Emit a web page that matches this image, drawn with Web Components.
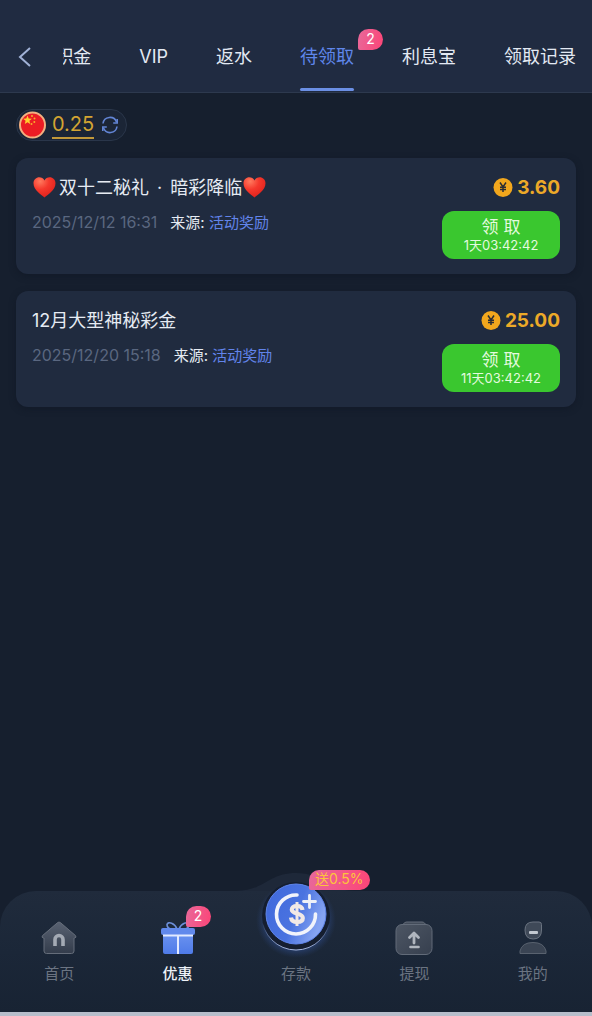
<!DOCTYPE html>
<html lang="zh-CN">
<head>
<meta charset="utf-8">
<meta name="viewport" content="width=device-width, initial-scale=1">
<title>待领取</title>
<style>
  html { background: #161f2e; }
  body {
    margin: 0;
    font-family: Inter, "Noto Sans CJK SC", sans-serif;
    color: #e6ebf3;
    background: #161f2e;
  }
</style>
</head>
<body>
<app-shell>
  <top-bar slot="header">
    <tab-item>积金</tab-item>
    <tab-item>VIP</tab-item>
    <tab-item>返水</tab-item>
    <tab-item active>待领取<pill-badge slot="badge">2</pill-badge></tab-item>
    <tab-item>利息宝</tab-item>
    <tab-item>领取记录</tab-item>
  </top-bar>

  <balance-chip>0.25</balance-chip>
  <reward-card amount="3.60" date="2025/12/12 16:31" source="活动奖励" countdown="1天03:42:42"><heart-icon></heart-icon>双十二秘礼<span> · </span>暗彩降临<heart-icon></heart-icon></reward-card>
  <reward-card amount="25.00" date="2025/12/20 15:18" source="活动奖励" countdown="11天03:42:42">12月大型神秘彩金</reward-card>

  <bottom-nav slot="footer">
    <nav-item icon="home">首页</nav-item>
    <nav-item icon="gift" active>优惠<pill-badge slot="badge">2</pill-badge></nav-item>
    <nav-item icon="deposit" featured>存款<pill-badge slot="badge" promo>送0.5%</pill-badge></nav-item>
    <nav-item icon="withdraw">提现</nav-item>
    <nav-item icon="user">我的</nav-item>
  </bottom-nav>
</app-shell>

<script>
const define = (name, render) => customElements.define(name, class extends HTMLElement {
  constructor() {
    super();
    this.attachShadow({ mode: 'open' });
  }
  connectedCallback() {
    this.shadowRoot.innerHTML = render(this);
  }
});

const icons = {
  home: `<svg width="38" height="36" viewBox="0 0 38 36">
    <defs><linearGradient id="g" x1="0" y1="0" x2="0" y2="1"><stop offset="0" stop-color="#596272"/><stop offset="1" stop-color="#333c4b"/></linearGradient></defs>
    <path d="M17.6 2.6Q19 1.500 20.400 2.600L35.500 15.600Q37 17.500 34.500 18H34V31Q34 33.500 31.500 33.500H6.500Q4 33.500 4 31V18H3.500Q1 17.500 2.500 15.600Z" fill="url(#g)" stroke="#656d7a"/>
    <path d="M15 26V19.500a4 4 0 0 1 8 0V26" fill="none" stroke="#a4aab4" stroke-width="3.600"/></svg>`,
  gift: `<svg width="38" height="36" viewBox="0 0 38 36">
    <defs><linearGradient id="g" x1="0" y1="0" x2="0" y2="1"><stop offset="0" stop-color="#6a92f0"/><stop offset="1" stop-color="#4f7be8"/></linearGradient></defs>
    <path d="M18 9C16 3 9 1 8 4.500Q8 8 12 9M20 9C22 3 29 1 30 4.500Q30 8 26 9" fill="none" stroke="#6c8ed8" stroke-width="1.600"/>
    <rect x="4" y="14" width="30" height="20" rx="2" fill="url(#g)"/>
    <rect x="2" y="8" width="34" height="7" rx="2" fill="#6189ec"/>
    <path d="M4 15.500H34M19 15.500V34" stroke="#e2eaff" stroke-width="2"/></svg>`,
  withdraw: `<svg width="38" height="36" viewBox="0 0 38 36">
    <defs><linearGradient id="g" x1="0" y1="0" x2="1" y2="1"><stop offset="0" stop-color="#4d5664"/><stop offset="1" stop-color="#363f4e"/></linearGradient></defs>
    <path d="M5 7 10 2.500Q11 2 12 2H27Q28.500 2 29.500 3L33 7" fill="#434c5a" stroke="#656d7a"/>
    <rect x="1" y="4.500" width="36" height="30" rx="6" fill="url(#g)" stroke="#626b79"/>
    <path d="M19 23V14M14.500 17.500 19 13l4.500 4.500" fill="none" stroke="#b0b6bf" stroke-width="2.800" stroke-linecap="round" stroke-linejoin="round"/>
    <path d="M15.500 27h8" stroke="#b0b6bf" stroke-width="2.600" stroke-linecap="round"/></svg>`,
  user: `<svg width="38" height="36" viewBox="0 0 38 36">
    <path d="M11 10q0-8 8-8h6q2.500 0 2.500 2.500V10q0 9-8.250 9T11 10Z" fill="#3f4958" stroke="#6a7380"/>
    <path d="M6 33.500V31q2-8.500 13-8.500T32 31v2.500Z" fill="#3a4453" stroke="#59626f" stroke-linejoin="round"/>
    <rect x="15" y="11" width="9" height="3" rx="1" fill="#c3c9d1"/></svg>`,
  deposit: `<svg width="88" height="88" viewBox="0 0 88 88">
    <defs>
      <linearGradient id="disc" x1="0" y1="0" x2="1" y2=".4"><stop offset="0" stop-color="#3f68dc"/><stop offset=".6" stop-color="#4a73e0"/><stop offset="1" stop-color="#86a4f2"/></linearGradient>
      <radialGradient id="glow"><stop offset=".72" stop-color="#3b62b8" stop-opacity=".65"/><stop offset="1" stop-color="#2a4580" stop-opacity="0"/></radialGradient>
      <linearGradient id="rim" x1="0" y1="0" x2="0" y2="1"><stop offset=".6" stop-color="#9db6ee" stop-opacity="0"/><stop offset="1" stop-color="#a9b9e0"/></linearGradient>
    </defs>
    <ellipse cx="44" cy="50" rx="40" ry="38" fill="url(#glow)" opacity=".8"/>
    <circle cx="44" cy="46" r="34" fill="#151e30" stroke="url(#rim)"/>
    <circle cx="44" cy="44" r="30" fill="url(#disc)" stroke="#5f85ea"/>
    <path d="M45 25A19.500 19.500 0 1 0 63.500 44" fill="none" stroke="#f1f3fb" stroke-width="3.600" stroke-linecap="round"/>
    <path d="M57.500 25.500v12M51.500 31.500h12" stroke="#eef1f8" stroke-width="2.800" stroke-linecap="round"/>
    <path d="M50.500 40Q50 36 45 36T39.800 39.800C39.800 44.500 50.800 42.500 50.800 48Q50.800 52 45.200 52T39 47.500" fill="none" stroke="#f1e9e6" stroke-width="4.200"/><path d="M45 32v24" stroke="#f1e9e6" stroke-width="3"/></svg>`
};

define('app-shell', () => `
  <style>
    :host { display: flex; flex-direction: column; min-height: 100vh; }
    main { flex: 1; display: flex; flex-direction: column; gap: 17px; padding: 16px; }
    footer { position: sticky; bottom: 0; }
    .edge { height: 4px; background: #b7becb; }
  </style>
  <header><slot name="header"></slot></header>
  <main><slot></slot></main>
  <footer><slot name="footer"></slot><div class="edge"></div></footer>`);

define('top-bar', () => `
  <style>
    :host { display: flex; box-sizing: border-box; height: 93px; background: #202b41; border-bottom: 1px solid #2d394e; }
    button { width: 63px; padding: 22px 0 0 16px; border: 0; background: none; text-align: left; flex: none; }
    svg { display: block; }
    nav { flex: 1; min-width: 0; display: flex; justify-content: flex-end; gap: 48px; padding-right: 16px; overflow: hidden; }
  </style>
  <button type="button" aria-label="返回">
    <svg width="18" height="22" viewBox="0 0 18 22"><path d="M14 2 4 11l10 9" fill="none" stroke="#a0b1d6" stroke-width="2"/></svg>
  </button>
  <nav><slot></slot></nav>`);

define('tab-item', () => `
  <style>
    :host { display: block; flex: none; }
    a { position: relative; display: flex; flex-direction: column; justify-content: flex-end; box-sizing: border-box; height: 92px; color: #e3e9f3; font-size: 18px; line-height: 28px; text-decoration: none; white-space: nowrap; }
    a::after { content: ""; height: 3px; margin-top: 17px; margin-bottom: 1px; border-radius: 2px; }
    :host([active]) a { color: #5f86ea; }
    :host([active]) a::after { background: #6b8fe4; }
    ::slotted(pill-badge) { position: absolute; left: calc(100% + 4px); top: 29px; }
  </style>
  <a href="#"><span><slot></slot></span><slot name="badge"></slot></a>`);

define('pill-badge', () => `
  <style>
    :host { display: block; box-sizing: border-box; min-width: 25px; height: 21px; border-radius: 11px 11px 11px 2px; background: linear-gradient(100deg, #e8689a, #fc4577); color: #fff; font-size: 14px; font-weight: 400; line-height: 20px; text-align: center; white-space: nowrap; }
    :host([promo]) { padding: 0 6px; height: 20px; color: #fcc43c; line-height: 18px; }
  </style><slot></slot>`);

define('balance-chip', () => `
  <style>
    :host { display: flex; align-self: flex-start; align-items: center; box-sizing: border-box; height: 32px; border: 1px solid #2a364a; border-radius: 16px; padding: 0 7px 0 2px; background: #1b2536; }
    .value { margin: 0 7px 0 5px; color: #d3a432; font-size: 20px; line-height: 25px; border-bottom: 2px solid #c1983a; }
    button { display: flex; padding: 0; border: 0; background: none; }
    svg { display: block; }
  </style>
  <svg width="28" height="28" viewBox="0 0 28 28" role="img" aria-label="人民币">
    <circle cx="13.500" cy="14" r="12.500" fill="#ec1c24" stroke="#f3b080" stroke-width="2"/>
    <path d="m8.500 4.500 1.200 3 3.200.2-2.500 2 .8 3.200-2.700-1.700-2.700 1.700.8-3.200-2.500-2 3.200-.2z" fill="#ffcf2e"/>
    <g fill="#f9ac2b"><circle cx="13" cy="5" r="1"/><circle cx="15.500" cy="7.500" r="1"/><circle cx="15.300" cy="11" r="1"/><circle cx="12.500" cy="13" r="1"/></g>
  </svg>
  <span class="value"><slot></slot></span>
  <button type="button" aria-label="刷新">
    <svg width="18" height="18" viewBox="0 0 18 18" fill="none" stroke="#6284d4" stroke-width="1.600">
      <path d="M2 7.500A7 7 0 0 1 15.500 6M16 10.500A7 7 0 0 1 2.500 12"/><path d="M16.200 3v4h-4M1.800 15v-4h4"/>
    </svg>
  </button>`);

define('heart-icon', () => `
  <style>:host { display: inline-block; width: 23px; height: 22px; margin: 0 3px 0 1px; vertical-align: -4px; } svg { display: block; }</style>
  <svg width="23" height="22" viewBox="0 0 23 22" role="img" aria-label="❤️">
    <defs><radialGradient id="h" cx=".3" cy=".2" r=".9"><stop offset="0" stop-color="#ff7a5e"/><stop offset=".45" stop-color="#f5382c"/><stop offset="1" stop-color="#dc1f1b"/></radialGradient></defs>
    <path d="M11.500 21.500C8 18.500 .5 14 .5 7.300 .5 3.800 3.200 1.300 6.300 1.300c2.200 0 4.200 1.200 5.200 3.200 1-2 3-3.200 5.200-3.200 3.100 0 5.800 2.500 5.800 6 0 6.700-7.500 11.200-11 14.200Z" fill="url(#h)"/>
  </svg>`);

define('reward-card', el => `
  <style>
    :host { display: grid; grid-template-columns: 1fr auto; column-gap: 16px; box-sizing: border-box; padding: 16px 16px 15px; border-radius: 12px; background: #202b3f; box-shadow: 0 2px 6px #121a28; }
    h2 { margin: 0; font-size: 18px; font-weight: 400; line-height: 28px; color: #e6ebf3; }
    ::slotted(span) { margin: 0 3px; }
    p { margin: 8px 0 0; font-size: 15px; line-height: 24px; color: #5a6780; }
    time { font-size: 16px; }
    .from { margin-left: 13px; color: #e6ebf3; }
    a { color: #6284ea; text-decoration: none; }
    .amount { display: flex; align-items: center; justify-content: flex-end; gap: 4px; font-size: 19px; font-weight: 700; line-height: 28px; color: #eca928; }
    button { display: block; width: 118px; height: 48px; margin-top: 9px; padding: 0; border: 0; border-radius: 12px; background: #3ac72f; color: #e3fadf; font-family: inherit; font-size: 17px; line-height: 20px; }
    small { display: block; font-size: 13px; line-height: 16px; }
  </style>
  <div><h2><slot></slot></h2>
    <p><time>${el.getAttribute('date')}</time><span class="from">来源: <a href="#">${el.getAttribute('source')}</a></span></p></div>
  <div><div class="amount">
    <svg width="20" height="20" viewBox="0 0 20 20"><circle cx="10" cy="9.500" r="9.500" fill="#f2a71d"/><path d="M7 4.500 10 9l3-4.500M10 9v5M7 9.200h6M7 11.500h6" fill="none" stroke="#2a2d34" stroke-width="1.500"/></svg>
    <span>${el.getAttribute('amount')}</span></div>
    <button type="button">领 取<small>${el.getAttribute('countdown')}</small></button></div>`);

define('bottom-nav', () => `
  <style>
    :host { position: relative; display: block; }
    nav { position: relative; display: grid; grid-template-columns: repeat(5, 1fr); height: 121px; border-radius: 36px 36px 0 0; background: linear-gradient(#202b3c, #1b2738 50%, #182333); }
    .hump { position: absolute; left: 50%; bottom: 100%; margin-left: -60px; display: block; }
  </style>
  <svg class="hump" width="120" height="19" viewBox="0 0 120 19"><path d="M0 19C28 19 32 1 60 1s32 18 60 18Z" fill="#1e2839"/></svg>
  <nav><slot></slot></nav>`);

define('nav-item', el => `
  <style>
    :host { display: block; }
    a { position: relative; display: flex; flex-direction: column; align-items: center; padding-top: 29px; color: #6b7482; font-size: 15px; line-height: 24px; text-decoration: none; }
    .icon { position: relative; display: flex; justify-content: center; align-items: center; width: 38px; height: 36px; margin-bottom: 6px; }
    svg { display: block; flex: none; }
    :host([active]) a { color: #eef2f8; font-weight: 500; }
    :host([featured]) .icon svg { margin-bottom: 48px; }
    ::slotted(pill-badge) { position: absolute; left: 27px; bottom: 29px; }
    ::slotted(pill-badge[promo]) { left: 32px; bottom: 66px; }
  </style>
  <a href="#"><span class="icon">${icons[el.getAttribute('icon')]}<slot name="badge"></slot></span><span><slot></slot></span></a>`);
</script>
</body>
</html>
